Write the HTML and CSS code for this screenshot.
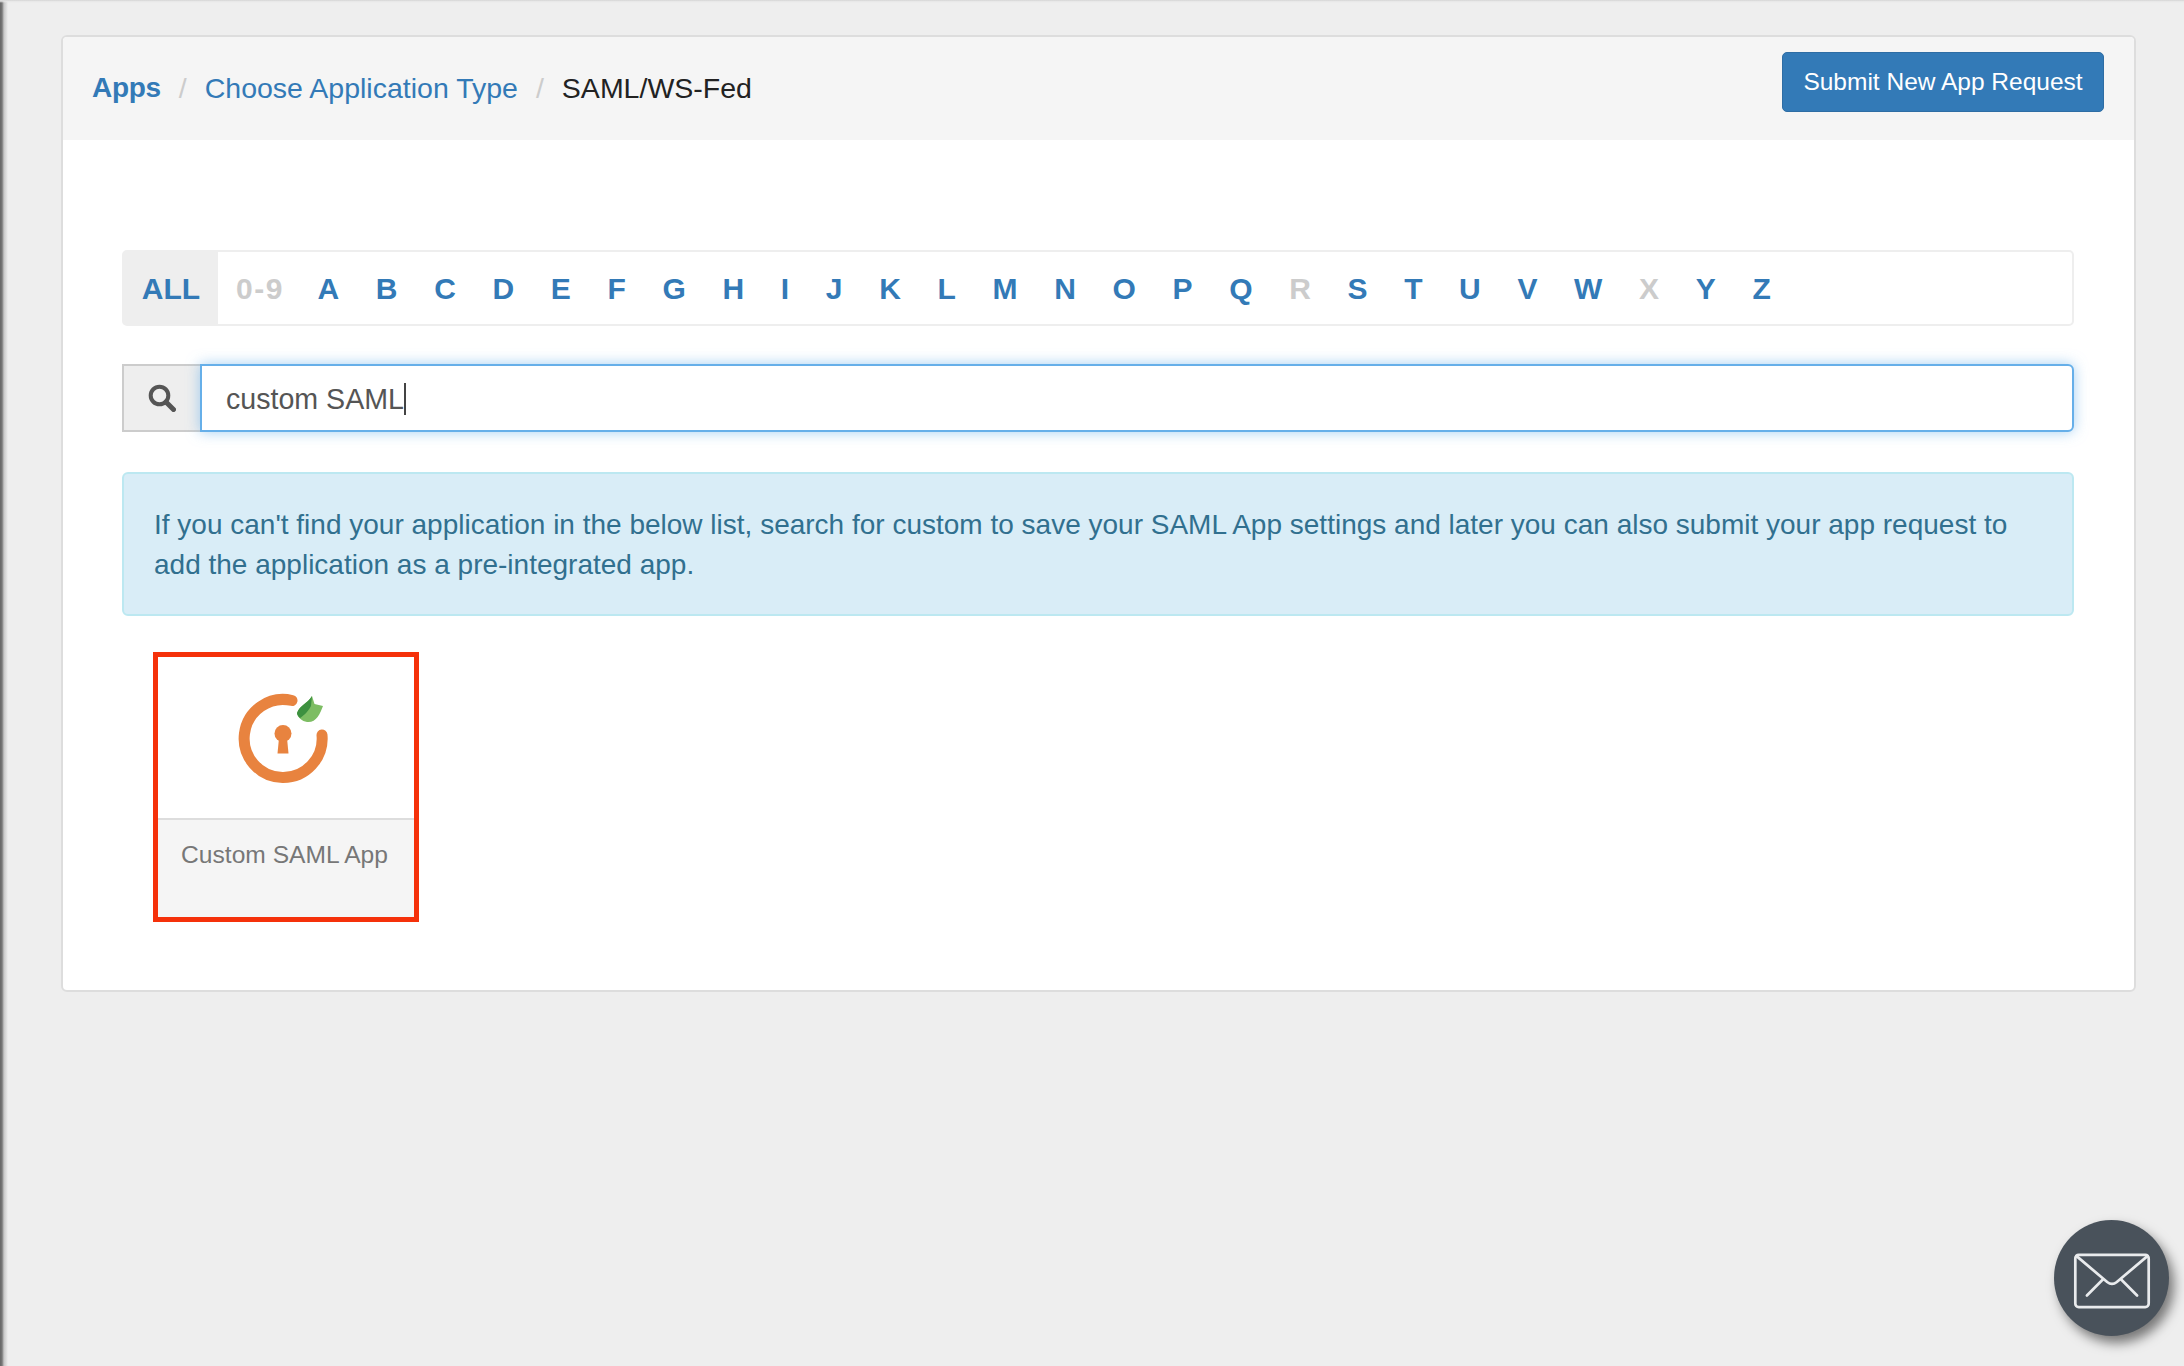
FILE: index.html
```html
<!DOCTYPE html>
<html lang="en">
<head>
<meta charset="utf-8">
<title>SAML/WS-Fed</title>
<link rel="stylesheet" href="styles.css">
</head>
<body>
<main class="card">
  <header class="card-head">
    <nav class="crumbs">
      <a class="crumb-root">Apps</a><span class="sep">/</span><a class="crumb-link">Choose Application Type</a><span class="sep">/</span><span class="crumb-now">SAML/WS-Fed</span>
    </nav>
    <a class="btn-primary">Submit New App Request</a>
  </header>
  <section class="card-body">
    <div class="alpha">
      <a class="alpha-all">ALL</a>
      <div class="alpha-list">
        <span class="off digits">0-9</span><a>A</a><a>B</a><a>C</a><a>D</a><a>E</a><a>F</a><a>G</a><a>H</a><a>I</a><a>J</a><a>K</a><a>L</a><a>M</a><a>N</a><a>O</a><a>P</a><a>Q</a><span class="off">R</span><a>S</a><a>T</a><a>U</a><a>V</a><a>W</a><span class="off">X</span><a>Y</a><a>Z</a>
      </div>
    </div>
    <div class="search">
      <span class="search-addon">
        <svg class="search-icon" viewBox="0 0 28 28" aria-hidden="true"><circle cx="11.5" cy="11.5" r="8.8" fill="none" stroke="#555" stroke-width="4"/><path d="M18 18l7.500 7.500" fill="none" stroke="#555" stroke-width="5" stroke-linecap="round"/></svg>
      </span>
      <div class="search-input" role="textbox">custom SAML<span class="caret"></span></div>
    </div>
    <p class="alert">If you can't find your application in the below list, search for custom to save your SAML App settings and later you can also submit your app request to add the application as a pre-integrated app.</p>
    <a class="tile">
      <span class="tile-logo">
        <svg class="logo" viewBox="233 689 100 100" aria-hidden="true">
          <path d="M292 700.500A39 39 0 1 0 322 735" fill="none" stroke="#e8833f" stroke-width="11" stroke-linecap="round"/>
          <circle cx="283" cy="733.500" r="8.500" fill="#e8833f"/>
          <path d="M279 738L277.500 753.500H288.500L287 738z" fill="#e8833f"/>
          <path d="M297 713C300 705 307 704 312 696L314.500 704 323 706C320 714 316 723 307 722 302 721 298 718 297 713z" fill="#7dbd63"/>
          <path d="M297 713C300 705 307 704 312 696L311 706C308 712 302 717 300 718 298 716 297 715 297 713z" fill="#3d9140"/>
        </svg>
      </span>
      <span class="tile-name">Custom SAML App</span>
    </a>
  </section>
</main>
<a class="mail-fab" aria-label="Contact">
  <svg class="mail-icon" viewBox="0 0 80 58" aria-hidden="true">
    <rect x="2" y="2" width="76" height="54" rx="3.500" fill="none" stroke="#e9ebed" stroke-width="2.800"/>
    <path d="M3 3L35 30Q40 34 45 30L77 3M31 27L14 44M49 27L66 44" fill="none" stroke="#e9ebed" stroke-width="2.800" stroke-linecap="round"/>
  </svg>
</a>
</body>
</html>
```
FILE: styles.css
```css
* { box-sizing: border-box; }
html, body { height: 100%; }
body {
  margin: 0;
  padding: 35px 48px 0 61px;
  height: 1366px;
  overflow: hidden;
  font-family: "Liberation Sans", Arial, sans-serif;
  color: #333;
  background:
    linear-gradient(180deg, #cfcfcf 0, #e6e6e6 1px, rgba(238,238,238,0) 3px),
    linear-gradient(90deg, #666 0, #777 2px, #c8c8c8 4px, #eee 8px);
  background-color: #eee;
}
a { text-decoration: none; }

.card {
  width: 2075px;
  height: 957px;
  background: #fff;
  border: 2px solid #ddd;
  border-radius: 6px;
  display: flex;
  flex-direction: column;
}
.card-head {
  height: 103px;
  flex: none;
  background: #f5f5f5;
  padding: 15px 30px 0 29px;
  display: flex;
  justify-content: space-between;
  align-items: flex-start;
  border-radius: 4px 4px 0 0;
}
.crumbs {
  margin-top: 16px;
  font-size: 28.5px;
  line-height: 40px;
  display: flex;
}
.crumb-root { font-weight: 700; color: #337ab7; font-size: 28px; letter-spacing: -.3px; }
.crumb-link { color: #337ab7; }
.crumb-now { color: #222; }
.sep { color: #ccc; padding: 0 18px; }
.btn-primary {
  width: 322px;
  height: 60px;
  background: #337ab7;
  border: 1px solid #2e6da4;
  border-radius: 5px;
  color: #fff;
  font-size: 24.500px;
  line-height: 58px;
  text-align: center;
}

.card-body {
  padding: 110px 60px 0 59px;
  display: flex;
  flex-direction: column;
  align-items: flex-start;
}
.alpha {
  width: 100%;
  height: 76px;
  flex: none;
  border: 2px solid #eee;
  border-radius: 5px;
  display: flex;
  font-size: 30px;
  font-weight: 700;
  line-height: 73px;
}
.alpha-all {
  width: 94px;
  flex: none;
  background: #eee;
  color: #337ab7;
  text-align: center;
}
.alpha-list {
  display: flex;
  gap: 36.660px;
  padding-left: 18px;
  color: #337ab7;
}
.alpha-list a { color: #337ab7; }
.alpha-list .off { color: #ccc; }
.alpha-list .digits { letter-spacing: 1.500px; margin-right: -3px; }

.search {
  width: 100%;
  height: 68px;
  flex: none;
  margin-top: 38px;
  display: flex;
}
.search-addon {
  width: 78px;
  flex: none;
  background: #eee;
  border: 2px solid #ccc;
  border-right: 0;
  display: flex;
  align-items: center;
  padding-left: 24px;
}
.search-icon { width: 28px; height: 28px; }
.search-input {
  flex: 1;
  border: 2px solid #66afe9;
  border-radius: 0 6px 6px 0;
  background: #fff;
  box-shadow: 0 0 14px rgba(102,175,233,.6);
  padding: 1px 0 0 24px;
  font-size: 28.600px;
  line-height: 62px;
  color: #555;
  display: flex;
  align-items: center;
}
.caret {
  width: 2px;
  height: 32px;
  background: #444;
}

.alert {
  width: 100%;
  height: 144px;
  flex: none;
  margin: 40px 0 0;
  padding: 31px 30px 0;
  background: #d9edf7;
  border: 2px solid #bce8f1;
  border-radius: 6px;
  color: #31708f;
  font-size: 28px;
  line-height: 40px;
}

.tile {
  width: 266px;
  height: 270px;
  flex: none;
  margin: 36px 0 0 31px;
  border: 5px solid #f5310a;
  background: #f5f5f5;
  display: flex;
  flex-direction: column;
}
.tile-logo {
  height: 163px;
  flex: none;
  background: #fff;
  border-bottom: 2px solid #ddd;
  padding: 32px 0 0 75px;
  display: block;
}
.logo { display: block; width: 100px; height: 100px; filter: blur(.5px); }
.tile-name {
  padding: 17px 3px 0 0;
  text-align: center;
  font-size: 24.600px;
  line-height: 36px;
  color: #777;
}

.mail-fab {
  position: fixed;
  right: 15px;
  bottom: 30px;
  width: 115px;
  height: 116px;
  border-radius: 50%;
  background: #49525b;
  box-shadow: 5px 7px 12px rgba(0,0,0,.5);
  display: flex;
  align-items: center;
  justify-content: center;
}
.mail-icon { width: 78px; height: 56px; margin-top: 5px; }
```
